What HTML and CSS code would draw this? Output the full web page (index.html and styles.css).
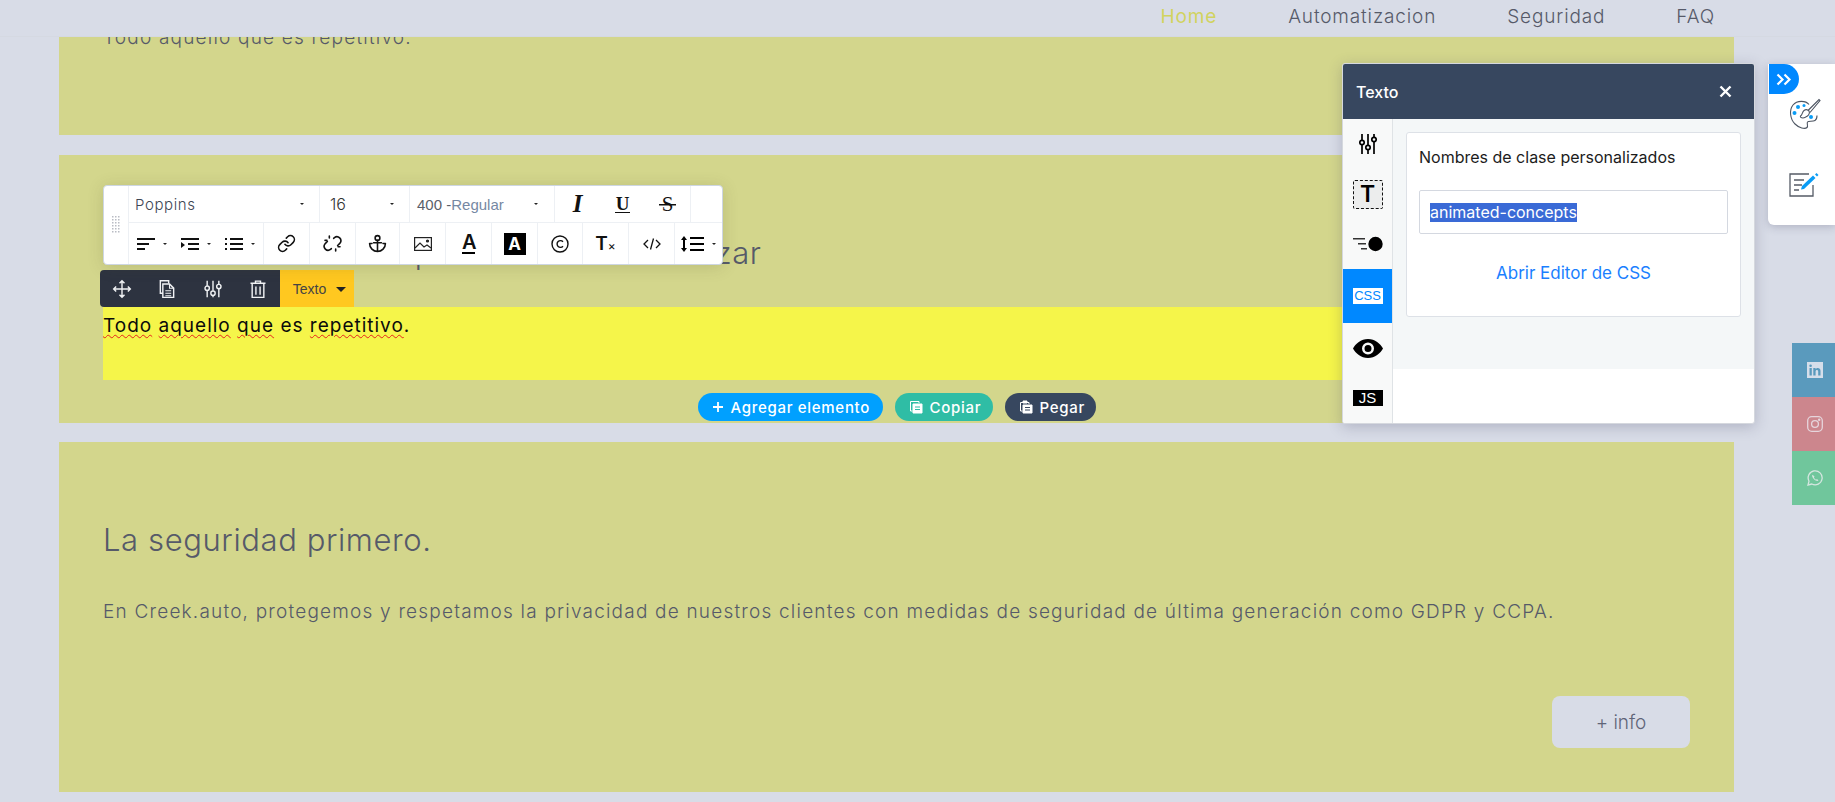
FILE: index.html
```html
<!DOCTYPE html>
<html lang="es">
<head>
<meta charset="utf-8">
<title>Creek.auto</title>
<link rel="stylesheet" href="styles.css">
</head>
<body>
<nav class="nav">
  <a class="nav-link active">Home</a>
  <a class="nav-link">Automatizacion</a>
  <a class="nav-link">Seguridad</a>
  <a class="nav-link">FAQ</a>
</nav>

<main class="page">
  <section class="sec sec-a">
    <p class="body-text">Todo aquello que es repetitivo.</p>
  </section>

  <section class="sec sec-b">
    <h2 class="heading">Automatizar todo lo que desees automatizar</h2>
    <div class="editing"><span class="sp">Todo</span> <span class="sp">aquello</span> <span class="sp">que</span> es <span class="sp">repetitivo</span>.</div>
    <div class="adders">
      <button class="pill pill-blue"><svg width="12" height="12" viewBox="0 0 12 12"><path d="M6 1v10M1 6h10" stroke="#fff" stroke-width="1.8"/></svg>Agregar elemento</button>
      <button class="pill pill-teal"><svg width="14" height="14" viewBox="0 0 14 14" fill="none" stroke="#fff"><path d="M3.5 11H1.5V1.5H10V3"/><path d="M4 4h9v9H4z" fill="#fff"/><path d="M6 7h5M6 9.5h5" stroke="#2fbda5"/></svg>Copiar</button>
      <button class="pill pill-navy"><svg width="14" height="14" viewBox="0 0 14 14" fill="none" stroke="#fff"><path d="M3.5 11H1.5V2.5H10V4"/><path d="M4 1h4v2H4z" fill="#fff"/><path d="M4 5h9v8H4z" fill="#fff"/><path d="M6 7.5h5M6 10h5" stroke="#37475f"/></svg>Pegar</button>
    </div>
  </section>

  <section class="sec sec-c">
    <h2 class="heading">La seguridad primero.</h2>
    <p class="lead">En Creek.auto, protegemos y respetamos la privacidad de nuestros clientes con medidas de seguridad de última generación como GDPR y CCPA.</p>
    <div class="more-row"><a class="more">+ info</a></div>
  </section>
</main>

<div class="toolbar">
  <div class="grip"><svg width="8" height="18" viewBox="0 0 8 18" fill="#b9bcc4"><path d="M0 0h1.5v1.5H0zM3 0h1.5v1.5H3zM6 0h1.5v1.5H6zM0 3h1.5v1.5H0zM3 3h1.5v1.5H3zM6 3h1.5v1.5H6zM0 6h1.5v1.5H0zM3 6h1.5v1.5H3zM6 6h1.5v1.5H6zM0 9h1.5v1.5H0zM3 9h1.5v1.5H3zM6 9h1.5v1.5H6zM0 12h1.5v1.5H0zM3 12h1.5v1.5H3zM6 12h1.5v1.5H6zM0 15h1.5v1.5H0zM3 15h1.5v1.5H3zM6 15h1.5v1.5H6z"/></svg></div>
  <div class="tb-rows">
    <div class="tb-row tb-top">
      <div class="sel sel-font"><span>Poppins</span><i class="caret"></i></div>
      <div class="sel sel-size"><span>16</span><i class="caret"></i></div>
      <div class="sel sel-weight"><span>400 -<em>Regular</em></span><i class="caret"></i></div>
      <div class="fmt fmt-i">I</div>
      <div class="fmt fmt-u"><span>U</span></div>
      <div class="fmt fmt-s"><span>S</span></div>
      <div class="fmt-last"></div>
    </div>
    <div class="tb-row tb-bottom">
      <div class="lists">
        <div class="drop"><svg width="18" height="12" viewBox="0 0 18 12"><path d="M0 0h18v2H0zM0 5h12v2H0zM0 10h8v2H0z"/></svg><i class="caret"></i></div>
        <div class="drop"><svg width="18" height="12" viewBox="0 0 18 12"><path d="M0 0h18v2H0zM7 5h11v2H7zM7 10h11v2H7zM0 4l4 3-4 3z"/></svg><i class="caret"></i></div>
        <div class="drop"><svg width="18" height="12" viewBox="0 0 18 12"><path d="M5 0h13v2H5zM5 5h13v2H5zM5 10h13v2H5zM0 0h2v2H0zM0 5h2v2H0zM0 10h2v2H0z"/></svg><i class="caret"></i></div>
      </div>
      <div class="cell"><svg class="ic" viewBox="0 0 24 24"><path d="M10 13a5 5 0 0 0 7.54.54l3-3a5 5 0 0 0-7.07-7.07l-1.72 1.71"/><path d="M14 11a5 5 0 0 0-7.54-.54l-3 3a5 5 0 0 0 7.07 7.07l1.71-1.71"/></svg></div>
      <div class="cell"><svg class="ic" viewBox="0 0 24 24"><path d="M13.500 5.500l1-1a5 5 0 0 1 7 7l-3 3"/><path d="M10.500 18.500l-1 1a5 5 0 0 1-7-7l3-3"/><path d="M8 2.500V5M2.500 8H5M16 21.500V19M21.500 16H19"/></svg></div>
      <div class="cell cell-a"><svg class="ic" viewBox="0 0 24 24"><circle cx="12" cy="5" r="3"/><path d="M12 22V8M7 11h10M5 12H2a10 10 0 0 0 20 0h-3"/></svg></div>
      <div class="cell"><svg width="18" height="14" viewBox="0 0 18 14" fill="none" stroke="#222" stroke-width="1.2"><rect x=".6" y=".6" width="16.8" height="12.8"/><path d="M1 11l5-5 4 4 3-2 4 3" /><circle cx="13.5" cy="4" r="1" fill="#222"/></svg></div>
      <div class="cell"><span class="a-color">A</span></div>
      <div class="cell"><span class="a-bg">A</span></div>
      <div class="cell cell-c"><svg width="18" height="18" viewBox="0 0 18 18" fill="none" stroke="#111" stroke-width="1.4"><circle cx="9" cy="9" r="8"/><path d="M12 6.7a3.4 3.4 0 1 0 0 4.6"/></svg></div>
      <div class="cell"><span class="tx">T<small>×</small></span></div>
      <div class="cell"><svg width="18" height="12" viewBox="0 0 18 12" fill="none" stroke="#111" stroke-width="1.3"><path d="M5 2L1 6l4 4M13 2l4 4-4 4M10.5 .5L7.5 11.5"/></svg></div>
      <div class="cell cell-lh"><svg width="24" height="16" viewBox="0 0 24 16"><path d="M9 1h14v2H9zM9 7h14v2H9zM9 13h14v2H9zM3 0l3 4H4v8h2l-3 4-3-4h2V4H0z"/></svg><i class="caret"></i></div>
    </div>
  </div>
</div>

<div class="elbar">
  <div class="elbar-tools">
    <svg class="ic-w" viewBox="0 0 24 24"><path d="M5 9l-3 3 3 3M9 5l3-3 3 3M15 19l-3 3-3-3M19 9l3 3-3 3M2 12h20M12 2v20"/></svg>
    <svg class="ic-w" viewBox="0 0 24 24"><path d="M14 5.5V2H4v15h3"/><path d="M7 6h8l5 5v11H7z"/><path d="M15 6v5h5M10 14h7M10 17h7M10 20h7" stroke-width="1.3"/></svg>
    <svg class="ic-w" viewBox="0 0 24 24"><path d="M5 2v6M5 14v8M12 2v12M12 20v2M19 2v4M19 12v10"/><circle cx="5" cy="11" r="2.6"/><circle cx="12" cy="17" r="2.6"/><circle cx="19" cy="9" r="2.6"/></svg>
    <svg class="ic-w" viewBox="0 0 24 24"><path d="M3 5h18M9 5V2.5h6V5M5 5v17h14V5M9.500 9v10M14.500 9v10"/></svg>
  </div>
  <div class="elbar-type"><span>Texto</span><i class="caret-lg"></i></div>
</div>

<aside class="panel">
  <header class="panel-head"><span>Texto</span>
    <svg width="13" height="13" viewBox="0 0 13 13"><path d="M1.500 1.500l10 10M11.500 1.500l-10 10" stroke="#fff" stroke-width="2.400"/></svg>
  </header>
  <div class="panel-main">
    <div class="tabs">
      <div class="tab"><svg width="18" height="20" viewBox="0 0 18 20" fill="none" stroke="#000" stroke-width="1.700"><path d="M3 0v6M3 11v9M9 0v11M9 16v4M15 0v3M15 8v12"/><circle cx="3" cy="8.500" r="2.200"/><circle cx="9" cy="13.500" r="2.200"/><circle cx="15" cy="5.500" r="2.200"/></svg></div>
      <div class="tab"><span class="t-box">T</span></div>
      <div class="tab"><svg width="30" height="16" viewBox="0 0 30 16"><path d="M0 2h12v1.500H0zM5 7h8v1.500H5zM8 12h6v1.500H8z" fill="#333"/><circle cx="22.500" cy="8" r="7.200"/></svg></div>
      <div class="tab tab-on"><span class="t-css">CSS</span></div>
      <div class="tab"><svg width="30" height="19" viewBox="0 0 30 19"><path fill-rule="evenodd" d="M15 0c7 0 12.500 5 15 9.500C27.500 14 22 19 15 19S2.500 14 0 9.500C2.500 5 8 0 15 0zm0 3.500a6 6 0 1 0 0 12 6 6 0 0 0 0-12zm0 2.500a3.500 3.500 0 1 1 0 7 3.500 3.500 0 0 1 0-7z"/></svg></div>
      <div class="tab"><span class="t-js">JS</span></div>
    </div>
    <div class="panel-body">
      <div class="panel-well">
        <div class="card">
          <div class="card-title">Nombres de clase personalizados</div>
          <div class="field"><span class="selected">animated-concepts</span></div>
          <a class="css-link">Abrir Editor de CSS</a>
        </div>
      </div>
    </div>
  </div>
</aside>

<aside class="side">
  <div class="side-toggle"><svg width="16" height="13" viewBox="0 0 16 13" fill="none" stroke="#fff" stroke-width="2.200"><path d="M1.500 1.500l5 5-5 5M8.500 1.500l5 5-5 5"/></svg></div>
  <svg class="side-icon" width="32" height="33" viewBox="0 0 32 33" fill="none" stroke="#4d5562" stroke-width="1.100">
    <path d="M20 6.500C17 2.500 8 2 4 7c-4 5-3 14 2 19 4 4 10 5.500 12 3.500 1.500-1.500-.5-4 .5-5.500 1-1.500 5 0 7.500-1.500 2-1.200 2-4 2-5"/>
    <path d="M14 20c-2 0-3-1-2.500-2 2-1 1.500-4 3.500-5.500 2-1.500 4-.5 5 .5 1 1.500 0 4-1.500 5-1.500 1-3 2-4.500 2z"/>
    <path d="M19 12.500L30 1.500l1 1-10 12"/>
    <g fill="#0a9cf5" stroke="none"><circle cx="9" cy="9" r="2"/><circle cx="5.500" cy="15" r="2"/><circle cx="15" cy="7.500" r="1.500"/><circle cx="22" cy="19" r="2"/></g>
  </svg>
  <svg class="side-icon side-icon-b" width="31" height="25" viewBox="0 0 31 25" fill="none" stroke="#555b66" stroke-width="1.300">
    <path d="M24 13v11H1V2h19M5 8h10M5 13h8M5 18h5"/>
    <path d="M12 17.500l1-3.500 11-10.500 2.500 2.500L15 17z" fill="#0a9cf5" stroke="none"/>
    <path d="M26 2.500l1.500-1.500 2 2-1.500 1.500z" fill="#0a9cf5" stroke="none"/>
  </svg>
</aside>

<div class="social">
  <div class="soc soc-in"><svg width="16" height="16" viewBox="0 0 16 16" fill="#d5deea"><path fill-rule="evenodd" d="M0 0h16v16H0zM2.500 6v7.500h2.300V6zM3.600 2.500a1.300 1.300 0 1 0 0 2.600 1.300 1.300 0 0 0 0-2.600zM6.300 6v7.500h2.300V9.500c0-2 2.600-2 2.600 0v4h2.300V9c0-3.500-3.700-3.500-4.900-1.800V6z"/></svg></div>
  <div class="soc soc-ig"><svg width="16" height="16" viewBox="0 0 16 16" fill="none" stroke="#e6d5dc" stroke-width="1.300"><rect x=".7" y=".7" width="14.600" height="14.600" rx="4"/><circle cx="8" cy="8" r="3.400"/><circle cx="12.200" cy="3.800" r=".6" fill="#e6d5dc"/></svg></div>
  <div class="soc soc-wa"><svg width="16" height="16" viewBox="0 0 16 16" fill="none" stroke="#d5e6e0" stroke-width="1.300"><path d="M1 15l1-3.800A7 7 0 1 1 4.800 14z"/><path d="M5.500 4.800c-1 1 0 3 1.500 4.500s3.500 2.300 4.500 1.300l-1.500-1.500-1 .6c-1-.4-1.700-1.200-2.100-2.100l.6-1z" fill="#d5e6e0" stroke="none"/></svg></div>
</div>
</body>
</html>
```
FILE: styles.css
```css
* { box-sizing: border-box; }
html, body { margin: 0; height: 802px; overflow: hidden; }
body {
  background: #d8dce7;
  font-family: Inter, "Liberation Sans", sans-serif;
  color: #565a69;
  position: relative;
}
.nav {
  position: absolute; top: 0; left: 0; right: 0; height: 37px; z-index: 2;
  background: #d8dce7;
  border-bottom: 1px solid #d5d9e2;
  display: flex; justify-content: flex-end; gap: 71px;
  padding-right: 120px;
  font-size: 19px; font-weight: 300; line-height: 33px;
  letter-spacing: .85px;
}
.nav-link { color: #565a69; }
.nav-link.active { color: #d1d35f; font-weight: 400; }

.page { margin-left: 59px; width: 1675px; display: flex; flex-direction: column; }
.sec { background: #d3d68c; padding: 0 44px; }
.sec-a { height: 135px; margin-bottom: 20px; padding-top: 26px; }
.sec-b { height: 268px; margin-bottom: 19px; padding-top: 78px; }
.sec-c { height: 350px; padding-top: 78px; }
.body-text { margin: 0; font-size: 19px; font-weight: 300; line-height: 24px; letter-spacing: 1.2px; }
.heading { margin: 0; font-size: 31px; line-height: 40px; font-weight: 300; letter-spacing: .6px; color: #565a69; height: 40px; white-space: nowrap; }
.editing {
  margin: 34px -3px 0 0; height: 73px; background: #f5f54a; color: #0b0b0b;
  font-size: 19px; line-height: 27px; padding-top: 5px; font-weight: 400; letter-spacing: 1px;
}
.sp { text-decoration: underline wavy #e6231c 1px; text-underline-offset: 2px; }
.adders { display: flex; justify-content: center; gap: 12px; margin-top: 13px; }
.pill {
  height: 28px; border: 0; border-radius: 14px; color: #fff; display: flex; align-items: center; gap: 7px;
  padding: 0 0 0 14px; font: 500 15px Inter, sans-serif; letter-spacing: .7px; white-space: nowrap;
}
.pill svg { flex: none; }
.pill-blue { background: #00a0ff; width: 185px; }
.pill-teal { background: #2fbda5; width: 98px; }
.pill-navy { background: #37475f; width: 91px; }
.lead { margin: 37px 0 0; font-size: 19px; line-height: 30px; font-weight: 300; letter-spacing: 1.2px; }
.more-row { display: flex; justify-content: flex-end; margin-top: 69px; }
.more {
  width: 138px; height: 52px; border-radius: 8px; background: #d8dce7;
  display: flex; align-items: center; justify-content: center; font-size: 19px; font-weight: 300; color: #5f6478;
}

/* Toolbar */
.toolbar {
  position: absolute; left: 103px; top: 185px; width: 620px; height: 80px; z-index: 4;
  background: #fff; border: 1px solid #cdd6e2; border-radius: 4px; display: flex;
  box-shadow: 0 2px 16px rgba(80, 80, 40, .18);
}
.grip { width: 25px; display: flex; align-items: center; justify-content: center; border-right: 1px solid #edf0f4; flex: none; }
.tb-rows { flex: 1; display: flex; flex-direction: column; min-width: 0; }
.tb-row { display: flex; }
.tb-top { height: 37px; border-bottom: 1px solid #edf0f4; }
.tb-bottom { flex: 1; }
.sel { display: flex; align-items: center; justify-content: space-between; border-right: 1px solid #edf0f4; font-size: 15px; color: #3d4654; padding: 0 15px 0 6px; }
.sel-font { width: 191px; font-weight: 300; letter-spacing: .6px; }
.sel-size { width: 90px; padding-left: 10px; font-size: 16px; color: #333; font-weight: 300; }
.sel-weight { width: 145px; padding-left: 7px; padding-right: 16px; font: 15px "Liberation Sans", sans-serif; color: #5a5f6a; }
.sel-weight em { font-style: normal; color: #7688a3; }
.caret { display: inline-block; width: 0; height: 0; border: 2px solid transparent; border-top: 2px solid #222; border-bottom: 0; flex: none; }
.fmt { width: 45px; display: flex; justify-content: center; align-items: center; font: bold 19px "Liberation Serif", serif; color: #111; }
.fmt-i { font-style: italic; font-size: 25px; }
.fmt-u span { border-bottom: 1.500px solid #111; padding: 0 1px; line-height: 17px; }
.fmt-s { font-weight: 400; font-size: 21px; }
.fmt-s span { padding: 0 3px; background: linear-gradient(#111, #111) center 54% / 100% 1.500px no-repeat; }
.fmt-last { flex: 1; border-left: 1px solid #edf0f4; }
.lists { width: 135px; display: flex; justify-content: space-between; padding: 0 8px; align-items: center; border-right: 1px solid #edf0f4; flex: none; }
.drop { display: flex; align-items: center; gap: 8px; }
.drop svg { fill: #111; }
.cell { width: 46px; display: flex; align-items: center; justify-content: center; border-right: 1px solid #edf0f4; flex: none; }
.cell-a { width: 44px; }
.cell-c { width: 45px; }
.cell:last-child { border-right: 0; }
.cell-lh { flex: 1; gap: 7px; }
.ic { width: 19px; height: 19px; fill: none; stroke: #111; stroke-width: 2; stroke-linecap: round; stroke-linejoin: round; }
.a-color { font: 600 20px/18px Inter, sans-serif; color: #111; border-bottom: 2px solid #000; height: 21px; width: 13px; text-align: center; }
.a-bg { width: 22px; height: 22px; background: #000; color: #fff; font: bold 17px/22px Inter, sans-serif; text-align: center; }
.tx { font: 600 19px Inter, sans-serif; color: #111; }
.tx small { font-size: 12px; font-weight: 400; }

/* Element bar */
.elbar { position: absolute; left: 100px; top: 270px; height: 37px; width: 254px; z-index: 3; display: flex; }
.elbar-tools { width: 180px; background: #2d3340; border-radius: 4px 0 0 4px; display: flex; align-items: center; justify-content: space-between; padding: 0 12px; }
.ic-w { width: 20px; height: 20px; fill: none; stroke: #f0f2f4; stroke-width: 1.700; }
.elbar-type { flex: 1; background: #ffc820; display: flex; align-items: center; justify-content: center; gap: 10px; padding-left: 5px; font: 14px "Liberation Sans", sans-serif; color: #444; }
.caret-lg { width: 0; height: 0; border: 5px solid transparent; border-top: 5px solid #222; border-bottom: 0; margin-top: 2px; }

/* Panel */
.panel {
  position: absolute; left: 1342px; top: 63px; width: 413px; height: 361px; z-index: 5;
  background: #fff; border: 1px solid #d5d8de; border-radius: 3px; overflow: hidden;
  box-shadow: 0 3px 14px rgba(60, 60, 90, .25);
  display: flex; flex-direction: column;
}
.panel-head { height: 55px; flex: none; background: #37475f; color: #fff; display: flex; align-items: center; justify-content: space-between; padding: 0 22px 0 13px; font-size: 16px; font-weight: 500; }
.panel-main { flex: 1; display: flex; min-height: 0; }
.tabs { width: 50px; background: #f8f9f9; border-right: 1px solid #dfe3e6; display: flex; flex-direction: column; flex: none; }
.tab { height: 50px; display: flex; align-items: center; justify-content: center; }
.tab-on { height: 54px; background: #0088ff; }
.t-box { width: 30px; height: 29px; border: 1px dashed #111; border-radius: 2px; background: #eceded; color: #000; font: 600 23px/27px Inter, sans-serif; text-align: center; }
.t-css { width: 30px; height: 16px; background: #fff; color: #0088ff; font: 13px/16px "Liberation Sans", sans-serif; text-align: center; }
.t-js { width: 30px; height: 16px; background: #000; color: #fff; font: 15px/16px "Liberation Sans", sans-serif; text-align: center; }
.panel-body { flex: 1; min-width: 0; }
.panel-well { background: #f4f7f8; height: 250px; padding: 13px 13px 0 13px; }
.card { height: 185px; background: #fff; border: 1px solid #dde1e7; border-radius: 3px; padding: 14px 12px 0; display: flex; flex-direction: column; }
.card-title { font-size: 16px; line-height: 21px; color: #1c1c1c; }
.field { margin-top: 22px; height: 44px; border: 1px solid #d4d8e0; border-radius: 2px; padding: 0 10px; display: flex; align-items: center; font-size: 16px; color: #444; flex: none; }
.selected { background: #3a6ad6; color: #fff; line-height: 19px; }
.css-link { margin-top: 28px; text-align: center; color: #1a7fff; font-size: 17px; line-height: 22px; }

/* Right side */
.side {
  position: absolute; left: 1768px; top: 64px; width: 67px; height: 161px; z-index: 3;
  background: #fff; border-radius: 0 0 0 6px; box-shadow: 0 2px 8px rgba(60, 60, 90, .25);
  display: flex; flex-direction: column; align-items: flex-start; padding: 34px 0 0 21px;
}
.side-toggle { position: absolute; left: 1px; top: 0; width: 30px; height: 30px; background: #0088ff; border-radius: 0 15px 15px 0; display: flex; align-items: center; justify-content: center; }
.side-icon-b { margin-top: 41px; }
.social { position: absolute; left: 1792px; top: 343px; width: 43px; z-index: 3; display: flex; flex-direction: column; }
.soc { height: 54px; display: flex; align-items: center; justify-content: center; padding-left: 3px; }
.soc-in { background: #5a9abd; }
.soc-ig { background: #cc868d; }
.soc-wa { background: #70c69c; }
```
